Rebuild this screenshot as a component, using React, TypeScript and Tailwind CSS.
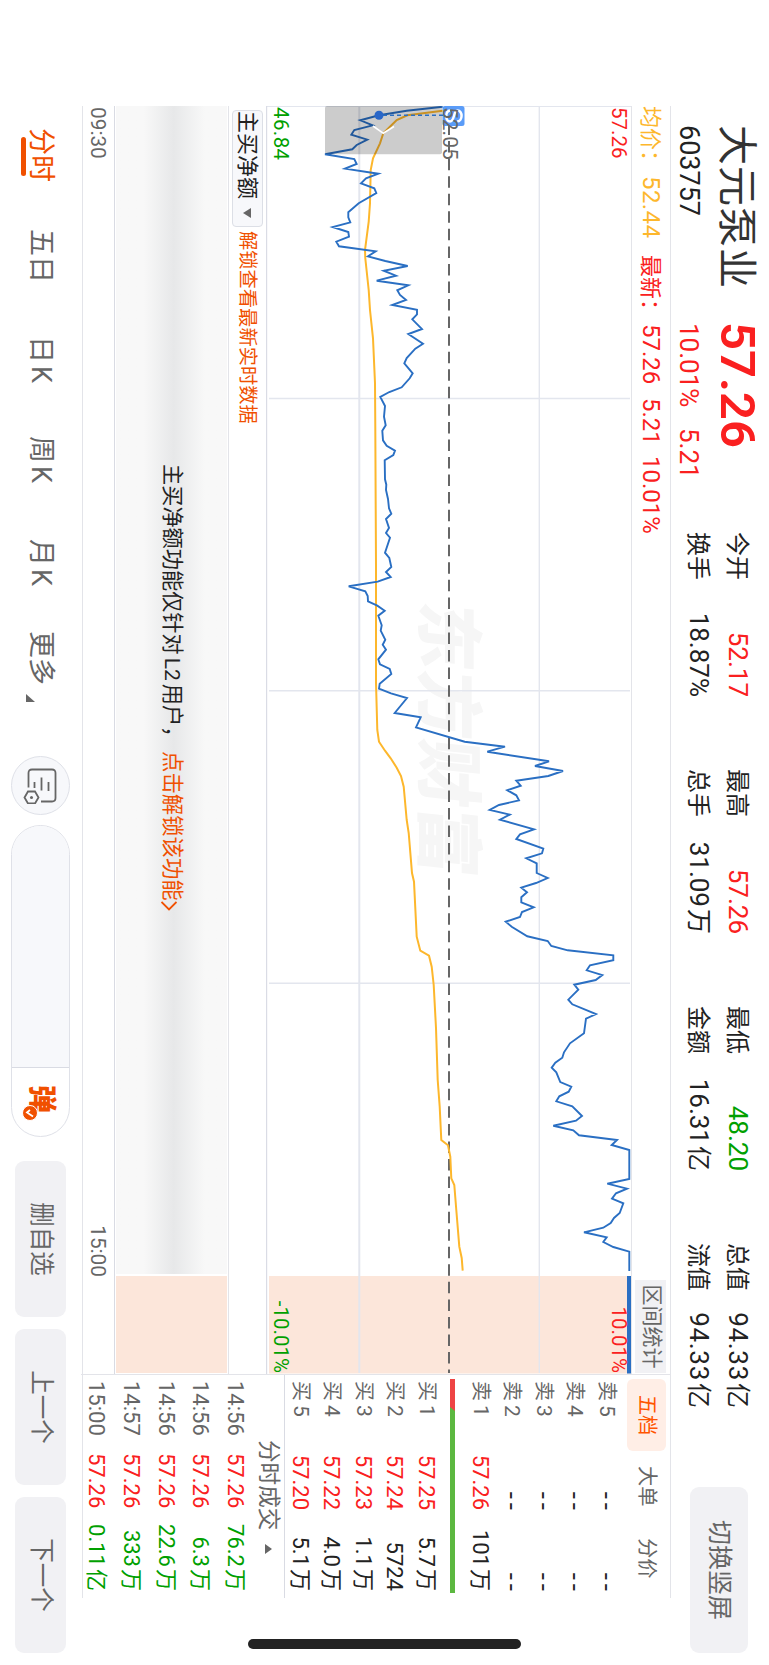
const PRICE_LINE =
  "106.7,326.3 110.7,362.3 115.3,390 120.3,408.7 125.3,396.3 130,414.7 134.7,417.7 139.7,401.7 145,412.3 149.3,416.7 154.3,444 159,414.7 164,412.3 168.7,424 173.7,390.7 178.3,403 183.3,408 188.3,394.7 193,392.7 203.3,410.3 212.3,420.7 217.3,420.7 222.3,418.7 227,436.3 232,420.7 236.7,420 241.7,432.7 246.3,430 251.3,393.3 256.3,401 261,383.7 266,361.3 270.7,385.3 275.7,373 280.7,392.3 285.3,360.7 290.3,371.7 295,369 300,363 305,376.7 309.7,352 314.3,352 319.3,356.7 329,347 334,360.7 343.7,346 348.7,353.7 358,362.3 363.3,364.7 373.3,356.3 378.3,359.3 387.3,367.3 392,379.7 397,388.7 406,384 416.7,385 425.3,383.3 430.7,386.7 440.3,386 445.7,382.3 450.7,374 455,375.7 460.3,384.3 479.3,384 484.7,382.7 490,383 499,381 508.3,380 513.7,377.7 519,383 528,380 533,383 537.7,379 552.7,384 558,379.7 567,377.7 572,383 577,378.3 581.7,391.3 586.3,420.3 591.3,403.7 596,401.3 601.3,401 605.7,391.7 610.7,384.3 615.7,390.7 625.3,387.3 630.7,388.3 639.7,383.7 644.7,386.3 649.7,383 659.3,390.7 664.3,389 669,379.3 674,377.7 683.7,389.3 688.7,390 693.3,378 698,362 713,374.3 717.3,348.3 727.3,353 741.7,304.3 746.7,264 751.7,281.7 761.3,220 766,234 771,206 776,220.7 780.7,252.7 785.7,248.3 790.3,261.7 795.3,252.7 800.3,250 805,270 810,279.3 814.7,259.3 819.7,269 829.3,235 834.3,249 839,252.7 848.7,225.7 853.3,227 858.3,242.7 863.3,232.3 873,232.3 878,221.3 883,233 887.7,247.7 892.3,242 897.3,247.7 902.3,247.7 907.3,235.3 912,247 917,249 921.7,263.3 926.7,257.3 936.3,241.7 941,221.3 946,217.7 950.3,201.3 955.3,155.7 960.3,155.7 965.3,179 970.3,182.3 975,166.7 980,173.3 984.7,194.7 989.7,190.7 999.7,200.7 1004.3,196.7 1014,173 1018.7,183 1033.3,185 1043.3,199 1052.3,205 1057.7,206.7 1062.7,213.7 1067.7,217.3 1072.3,212.7 1082,208.7 1086.7,197.7 1091.7,200.3 1096.3,209.7 1101.3,212.7 1106.3,196.7 1116,187 1120.7,193 1125.7,215.7 1130.3,195.7 1135.3,190 1140,152 1145,157.3 1150,139.7 1179,139.7 1183.7,161.7 1188.7,142 1193.3,153 1198.7,157 1203.3,145.7 1213,149.3 1218,155 1223,158.3 1227.7,165.7 1232.3,185 1237.3,162.3 1242,165.7 1247,155.7 1251.7,139.7 1271,139.7";

const AVERAGE_LINE =
  "110.7,326.3 115.3,361.7 120,372.3 125,377.3 133.3,385.7 143.3,389 158.3,396 170,398.3 203.3,399 221.7,400.3 250,404 258.3,403.7 290,400.3 310,399 338.3,396 383.3,394 426.7,393.7 566.7,393 683,393 730,391.7 741.7,390 750.7,384 758.3,378.3 767.7,372.3 776,368 786.7,365.3 820,362.3 833,360.3 873,357 881.7,355 936.7,352.3 950.7,348.7 955.7,340 966.7,337.3 985,335.3 1028,333 1080,331.3 1106.7,329.3 1140,327.7 1145.3,321 1156.7,318.7 1178.3,317.7 1185,314.7 1210,312.7 1246.7,309.7 1258,307.3 1270.7,306.3";

type Stat = {
  label: string;
  value: string;
  unit?: string;
  color: string;
};

const STATS: Stat[][] = [
  [
    { label: "今开", value: "52.17", color: "text-[#fa2020]" },
    { label: "换手", value: "18.87%", color: "text-[#222]" },
  ],
  [
    { label: "最高", value: "57.26", color: "text-[#fa2020]" },
    { label: "总手", value: "31.09", unit: "万", color: "text-[#222]" },
  ],
  [
    { label: "最低", value: "48.20", color: "text-[#00a000]" },
    { label: "金额", value: "16.31", unit: "亿", color: "text-[#222]" },
  ],
  [
    { label: "总值", value: "94.33", unit: "亿", color: "tracking-[0.7px] text-[#222]" },
    { label: "流值", value: "94.33", unit: "亿", color: "tracking-[0.7px] text-[#222]" },
  ],
];

const SELLS = [
  ["卖5", "--", "--"],
  ["卖4", "--", "--"],
  ["卖3", "--", "--"],
  ["卖2", "--", "--"],
  ["卖1", "57.26", "101万"],
];

const BUYS = [
  ["买1", "57.25", "5.7万"],
  ["买2", "57.24", "5724"],
  ["买3", "57.23", "1.1万"],
  ["买4", "57.22", "4.0万"],
  ["买5", "57.20", "5.1万"],
];

const TRADES = [
  ["14:56", "57.26", "76.2万"],
  ["14:56", "57.26", "6.3万"],
  ["14:56", "57.26", "22.6万"],
  ["14:57", "57.26", "333万"],
  ["15:00", "57.26", "0.11亿"],
];

const Header = () => {
  return (
    <header className="flex h-[98px] shrink-0 pl-[125px]">
      <div className="w-[197px] pt-[6px]">
        <h1 className="h-[53px] text-[40px] leading-[53px] tracking-[1px] text-[#333]">大元泵业</h1>
        <p className="text-[27px] leading-[42px]">603757</p>
      </div>
      <div className="w-[210px] pt-[6px] text-[#fa2020]">
        <p className="h-[53px] text-[49px] leading-[52px] font-semibold">57.26</p>
        <p className="flex pl-px text-[26px] leading-[42px]">
          <span className="w-[105px]">10.01%</span>
          <span>5.21</span>
        </p>
      </div>
      <div className="flex pt-3">
        {STATS.map((column) => (
          <div key={column[0].label} className="w-[237px]">
            {column.map((stat) => (
              <p key={stat.label} className="flex h-[39px] w-[165px] items-center justify-between text-[26px] whitespace-nowrap">
                <span className="text-2xl">{stat.label}</span>
                <span className={stat.color}>
                  {stat.value}
                  {stat.unit && <span className="ml-[2px] text-[25px] tracking-normal">{stat.unit}</span>}
                </span>
              </p>
            ))}
          </div>
        ))}
      </div>
      <button className="mt-[21px] ml-[7px] h-[58px] w-[166px] rounded-[9px] bg-[#f1f1f4] text-[25px] text-[#666]">
        切换竖屏
      </button>
    </header>
  );
};

const Legend = () => {
  return (
    <div className="flex h-10 items-center border-y border-[#e3e4e9] pr-px text-[24px] text-[#fa2020]">
      <span className="w-[70px] text-[22px] whitespace-nowrap text-[#fdb72c]">均价：</span>
      <span className="w-[79px] tracking-[0.4px] text-[#fdb72c]">52.44</span>
      <span className="w-[69px] text-[22px] whitespace-nowrap">最新：</span>
      <span className="w-[74px]">57.26</span>
      <span className="w-[58px]">5.21</span>
      <span>10.01%</span>
      <span className="ml-auto flex h-[31px] w-[93px] items-center justify-center bg-[#f1f1f4] text-[21px] text-[#666]">
        区间统计
      </span>
    </div>
  );
};

const MinuteChart = () => {
  return (
    <svg className="block h-[365px] w-[1268px] text-[20.5px]" viewBox="106 138 1268 365">
      <rect x="1276" y="139" width="97.5" height="361" fill="#fce6da" />
      <text
        x="600"
        y="345"
        fontSize="68"
        fontWeight="900"
        fill="#f6f6f6"
        letterSpacing="0.5"
        transform="skewX(-6)"
        style={{ transformOrigin: "600px 345px" }}
      >
        东方财富
      </text>
      <g stroke="#e3e6ee" strokeWidth="1.4">
        <path d="M106 229.7H1373M398.5 139V500M690.7 139V500M983.3 139V500" />
        <path d="M106 409.7H1373" strokeWidth="2" />
        <path d="M106.3 138V503" strokeWidth="1.2" />
      </g>
      <path d="M106 502.4H1374" stroke="#dadce5" strokeWidth="1.2" />
      <path d="M106 320H1373" stroke="#666" strokeWidth="2" strokeDasharray="11.5 6.05" />
      <rect x="106" y="304.500" width="20" height="22" rx="2.500" fill="#5a9cf8" />
      <path
        d="M121.500 312C121.500 306 110.500 306 110.500 311.500C110.500 316 121.500 314 121.500 319C121.500 324 111 324 110.500 319"
        fill="none"
        stroke="#fff"
        strokeWidth="2.500"
      />
      <text x="107" y="326.500" fill="#666" fontSize="21">52.05</text>
      <polyline points={AVERAGE_LINE} fill="none" stroke="#fdb72c" strokeWidth="2" />
      <polyline points={PRICE_LINE} fill="none" stroke="#2a6fc3" strokeWidth="1.9" />
      <rect x="106" y="327" width="48.3" height="117" rx="2" fill="#000" fillOpacity="0.2" />
      <path d="M115.3 326V390" stroke="#2a6fc3" strokeWidth="1.6" strokeDasharray="4 3" />
      <circle cx="115.3" cy="390" r="4.5" fill="#2a67c8" />
      <path d="M126 396L133.3 385.7L126.5 375" fill="none" stroke="#fff" strokeWidth="1.6" />
      <rect x="1276" y="138" width="97.5" height="4" fill="#2a6fc3" />
      <text x="107" y="157" fill="#fa2020">57.26</text>
      <text x="107" y="495" fill="#00a000" letterSpacing="0.4">46.84</text>
      <text x="1373" y="157" fill="#fa2020" textAnchor="end">10.01%</text>
      <text x="1373" y="495" fill="#00a000" textAnchor="end">-10.01%</text>
    </svg>
  );
};

const Indicator = () => {
  return (
    <>
      <div className="flex h-[38px] items-center border-b border-[#e3e4e9] pl-1">
        <button className="flex h-[31px] w-[117px] items-center gap-[9px] rounded-[4px] border border-[#dcdfe6] bg-[#f7f8fb] text-[22px] whitespace-nowrap">
          主买净额
          <i className="border-x-[5px] border-t-8 border-x-transparent border-t-[#666]" />
        </button>
        <span className="mt-[2px] ml-1 text-[19.3px] text-[#f05000]">解锁查看最新实时数据</span>
      </div>
      <div className="flex h-[114px] gap-[2px] border-b border-[#d9dbe3] py-px pr-px">
        <div className="flex w-[1168px] items-center bg-linear-to-b from-[#f8f8f8] from-20% via-[#e7e8e9] via-48% to-[#f8f8f8] to-75% pl-[358px] text-[21.4px] whitespace-nowrap">
          <span className="w-[287px] text-[21.2px]">
            主买净额功能仅针对<span className="mx-[3px] text-[21px]">L2</span>用户，
          </span>
          <span className="text-[#f05000]">点击解锁该功能</span>
          <svg className="mt-1 h-4 w-[10px]" viewBox="0 0 10 16" fill="none" stroke="#f05000" strokeWidth="1.8">
            <path d="M1 0.5L8.5 8L1 15.5" />
          </svg>
        </div>
        <div className="w-[97px] bg-[#fce6da]" />
      </div>
      <div className="flex h-8 items-center justify-between border-b border-[#e3e4e9] pt-[2px] pr-[97px] pl-px text-[20.8px] text-[#666]">
        <span>09:30</span>
        <span>15:00</span>
      </div>
    </>
  );
};

const Cell = ({ value }: { value: string }) => {
  if (value === "--") {
    return <span className="-mr-1 text-[26px] tracking-[4px]">--</span>;
  }
  const unit = value.match(/[万亿]$/)?.[0];
  return (
    <>
      {unit ? value.slice(0, -1) : value}
      {unit && <span className="ml-[2px]">{unit}</span>}
    </>
  );
};

const QuoteRow = ({ row }: { row: string[] }) => {
  return (
    <div className="flex h-[31.5px] shrink-0 items-center text-[22px] leading-[31px] whitespace-nowrap">
      <span className="w-[75px] text-[20px] text-[#666]">
        {row[0][0]}
        <span className="ml-1 text-[21px]">{row[0][1]}</span>
      </span>
      <span className={`flex w-[54px] justify-end ${row[1] === "--" ? "" : "text-[#fa2020]"}`}>
        <Cell value={row[1]} />
      </span>
      <span className="flex flex-1 justify-end">
        <Cell value={row[2]} />
      </span>
    </div>
  );
};

const OrderBook = () => {
  return (
    <aside className="w-[224px] shrink-0 border-t border-l border-[#e3e4e9]">
      <div className="flex h-[48px] items-start pt-1 pl-1 text-[20.3px] leading-[39px] text-[#666]">
        <span className="mr-[15px] w-[72px] rounded-[6px] bg-[#ffeee6] text-center text-[#ff5500]">五档</span>
        <span className="w-[72px]">大单</span>
        <span>分价</span>
      </div>
      <div className="h-[158px] pr-[7px] pl-[6px]">
        {SELLS.map((row) => <QuoteRow key={row[0]} row={row} />)}
      </div>
      <div className="flex h-[22px] items-center pl-1">
        <svg width="214" height="5" viewBox="0 0 214 5">
          <path d="M0 0H214V5H0Z" fill="#5cb840" />
          <path d="M0 0H32L28 5H0Z" fill="#ee4444" />
        </svg>
      </div>
      <div className="h-[158px] border-b border-[#d9dbe3] pr-[7px] pl-[6px]">
        {BUYS.map((row) => <QuoteRow key={row[0]} row={row} />)}
      </div>
      <div className="flex h-[31px] items-center pl-[65px] text-[22.6px] text-[#666]">
        分时成交
        <i className="ml-[14px] border-x-[5px] border-b-[7px] border-x-transparent border-b-[#666]" />
      </div>
      <div className="h-[171px] border-b border-[#e3e4e9] pr-[7px] pl-[6px] text-[22px]">
        {TRADES.map((trade, index) => (
          <div key={index} className="flex h-[34.8px] items-center whitespace-nowrap">
            <span className="w-[72px] text-[#666]">{trade[0]}</span>
            <span className="text-[#fa2020]">{trade[1]}</span>
            <span className="flex flex-1 justify-end text-[#00a000]">
              <Cell value={trade[2]} />
            </span>
          </div>
        ))}
      </div>
    </aside>
  );
};

const Toolbar = () => {
  return (
    <footer className="flex h-[81px] items-center pb-px pl-[128px] text-[27px] whitespace-nowrap text-[#666]">
      <span className="relative w-[101px] text-[#f05000]">
        分时
        <i className="absolute bottom-0 left-[9px] h-[5px] w-[39px] rounded-full bg-[#f05000]" />
      </span>
      <span className="w-[107px]">五日</span>
      <span className="w-[100px]">日<span className="ml-[3px]">K</span></span>
      <span className="w-[103px]">周<span className="ml-[3px]">K</span></span>
      <span className="w-[92px]">月<span className="ml-[3px]">K</span></span>
      <span className="flex w-[125px] items-end">
        更多
        <svg className="mb-[5px] ml-[9px] h-[9px] w-2" viewBox="0 0 8 9">
          <path d="M8 0V9H0Z" fill="#666" />
        </svg>
      </span>
      <button className="mr-[10px] flex size-[59px] items-center justify-center rounded-full border border-[#dfe1e8] bg-[#f7f8fb]">
        <svg className="mt-[2px] ml-[1px] h-[34px] w-[36px]" viewBox="0 0 36 34" fill="none" stroke="#666" strokeWidth="1.8">
          <path d="M19.5 28.5H5Q1.5 28.5 1.5 25V5Q1.5 1.5 5 1.5H30Q33.5 1.5 33.5 5V16" />
          <path d="M14 8.5H23M9.5 15.5H22.5M14 22.5H20" />
          <path d="M23.5 22L29.5 18.5L35.5 22V29L29.5 32.5L23.5 29Z" />
          <circle cx="29.5" cy="25.5" r="1.5" fill="#666" stroke="none" />
        </svg>
      </button>
      <div className="mr-[24px] flex h-[59px] w-[312px] overflow-hidden rounded-full border border-[#dfe1e8]">
        <div className="w-[242px] border-r border-[#d9dbe3] bg-[#f7f8fb]" />
        <div className="relative flex-1 pl-[17px] text-[28px] leading-[55px] font-black text-[#f05000]">
          弹
          <svg className="absolute top-[31px] left-[37px] size-4" viewBox="0 0 16 16" fill="none">
            <circle cx="8" cy="8" r="7.5" fill="#f05000" stroke="#fff" />
            <path d="M5 8L7.5 11L11.5 5" stroke="#fff" strokeWidth="1.8" />
          </svg>
        </div>
      </div>
      <div className="flex gap-3 text-[24.5px]">
        <button className="h-[51px] w-[156px] rounded-[9px] bg-[#f1f1f4]">删自选</button>
        <button className="h-[51px] w-[156px] rounded-[9px] bg-[#f1f1f4]">上一个</button>
        <button className="h-[51px] w-[156px] rounded-[9px] bg-[#f1f1f4]">下一个</button>
      </div>
    </footer>
  );
};

const App = () => {
  return (
    <div className="h-[1665px] w-[769px] overflow-hidden bg-white">
      {/* landscape screen, turned clockwise */}
      <div className="relative flex h-[769px] w-[1665px] origin-top-left translate-x-[769px] rotate-90 flex-col font-[Roboto,'Noto_Sans_CJK_SC',sans-serif] text-[#222]">
        <Header />
        <div className="flex h-[590px] shrink-0 pl-[106px]">
          <main className="w-[1268px] shrink-0">
            <Legend />
            <MinuteChart />
            <Indicator />
          </main>
          <OrderBook />
          <div className="ml-[41px] flex items-center">
            <div className="mb-[17px] h-[273px] w-[10px] rounded-full bg-[#222]" />
          </div>
        </div>
        <Toolbar />
      </div>
    </div>
  );
};

export default App;
